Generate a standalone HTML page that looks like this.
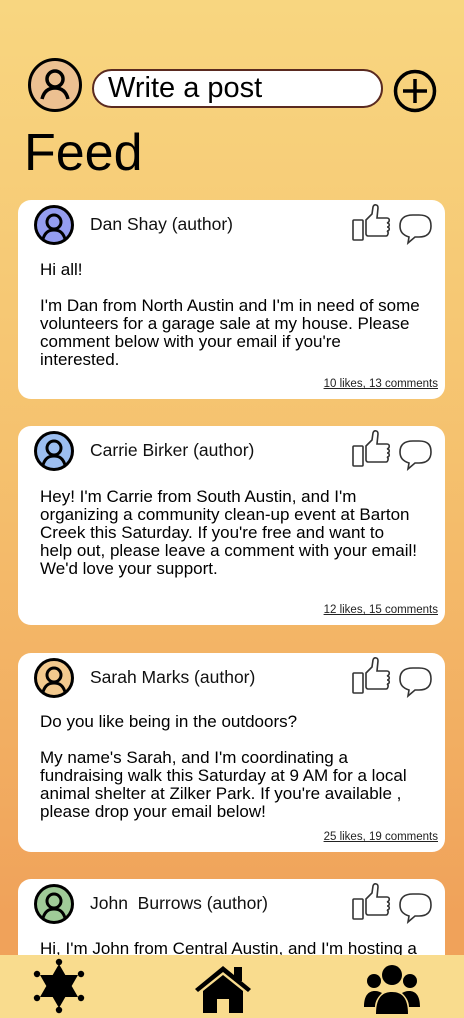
<!DOCTYPE html><html><head><style>
*{margin:0;padding:0;box-sizing:border-box}
html,body{width:464px;height:1018px;overflow:hidden}
body{position:relative;font-family:"Liberation Sans",sans-serif;background:linear-gradient(#f8d680 0%,#f5c16e 45%,#f0a25a 90%)}
.a{position:absolute}
.card{position:absolute;left:18px;width:427px;height:199px;background:#fff;border-radius:13px}
.av{position:absolute;left:16px;top:5px;width:40px;height:40px;border:3px solid #000;border-radius:50%}
.nm{position:absolute;left:72px;top:14px;font-size:17.5px;color:#111}
.bd{position:absolute;left:22px;top:61px;font-size:17px;line-height:18px;white-space:nowrap;color:#000}
.lk{position:absolute;right:7px;bottom:9px;font-size:11.5px;text-decoration:underline;color:#222}
.ic{position:absolute;left:334px;top:3px}
</style></head><body>
<div class="a" style="left:28px;top:58px;width:54px;height:54px;border:3px solid #000;border-radius:50%;background:#ecc091">
<svg width="48" height="48" viewBox="0 0 48 48"><circle cx="24" cy="18" r="8" fill="none" stroke="#000" stroke-width="3.5"/><path d="M11 38c2-8 7-11 13-11s11 3 13 11" fill="none" stroke="#000" stroke-width="3.5"/></svg></div>
<div class="a" style="left:92px;top:69px;width:291px;height:39px;border:2px solid #5a2a20;border-radius:20px;background:#fff;font-size:29px;line-height:35px;padding-left:14px">Write a post</div>
<svg class="a" style="left:393px;top:69px" width="44" height="44" viewBox="0 0 44 44"><circle cx="22" cy="22" r="19.5" fill="none" stroke="#000" stroke-width="3.5"/><path d="M22 10v24M10 22h24" stroke="#000" stroke-width="3.5"/></svg>
<div class="a" style="left:24px;top:122px;font-size:52px;line-height:62px">Feed</div>

<svg width="0" height="0" style="position:absolute"><defs>
<g id="icons"><rect x="1" y="17" width="10" height="20" rx="1" fill="none" stroke="#333" stroke-width="1.6"/><path d="M14 17l6-6 1-7c1-3 5-3 5 1l-1 10h10c3 0 3 4 0 5 3 0 3 4 0 4 3 0 3 4 0 4 2 1 1 5-1 5H16c-1 0-2-1-2-2z" fill="none" stroke="#333" stroke-width="1.6"/><path d="M56 40l1-6c-6-2-9-5-9-11 0-7 4-11 13-11h6c9 0 12 4 12 11s-4 11-12 11h-4z" fill="none" stroke="#333" stroke-width="1.6"/></g>
<g id="person"><circle cx="20" cy="15" r="7" fill="none" stroke="#000" stroke-width="3"/><path d="M9 32c2-7 6-9 11-9s9 2 11 9" fill="none" stroke="#000" stroke-width="3"/></g>
</defs></svg>

<div class="card" style="top:200px"><div class="av" style="background:#949df0"><svg width="34" height="34" viewBox="3 1 34 34"><use href="#person"/></svg></div><div class="nm">Dan Shay (author)</div><svg class="ic" width="82" height="42"><use href="#icons"/></svg>
<div class="bd">Hi all!<br><br>I'm Dan from North Austin and I'm in need of some<br>volunteers for a garage sale at my house. Please<br>comment below with your email if you're<br>interested.</div><div class="lk">10 likes, 13 comments</div></div>

<div class="card" style="top:426px"><div class="av" style="background:#9cbef0"><svg width="34" height="34" viewBox="3 1 34 34"><use href="#person"/></svg></div><div class="nm">Carrie Birker (author)</div><svg class="ic" width="82" height="42"><use href="#icons"/></svg>
<div class="bd" style="top:62px">Hey! I'm Carrie from South Austin, and I'm<br>organizing a community clean-up event at Barton<br>Creek this Saturday. If you're free and want to<br>help out, please leave a comment with your email!<br>We'd love your support.</div><div class="lk">12 likes, 15 comments</div></div>

<div class="card" style="top:653px"><div class="av" style="background:#f2c98e"><svg width="34" height="34" viewBox="3 1 34 34"><use href="#person"/></svg></div><div class="nm">Sarah Marks (author)</div><svg class="ic" width="82" height="42"><use href="#icons"/></svg>
<div class="bd" style="top:60px">Do you like being in the outdoors?<br><br>My name's Sarah, and I'm coordinating a<br>fundraising walk this Saturday at 9 AM for a local<br>animal shelter at Zilker Park. If you're available ,<br>please drop your email below!</div><div class="lk">25 likes, 19 comments</div></div>

<div class="card" style="top:879px;height:120px"><div class="av" style="background:#a0cb98"><svg width="34" height="34" viewBox="3 1 34 34"><use href="#person"/></svg></div><div class="nm">John&nbsp; Burrows (author)</div><svg class="ic" width="82" height="42"><use href="#icons"/></svg>
<div class="bd" style="top:61px">Hi, I'm John from Central Austin, and I'm hosting a</div></div>

<div class="a" style="left:0;top:955px;width:464px;height:63px;background:#f9dc8e"></div>
<svg class="a" style="left:29px;top:957px" width="60" height="58" viewBox="0 0 60 58"><path d="M30 7L49 40H11z M30 51L11 18h38z" fill="#000"/><g fill="#000"><circle cx="30" cy="5" r="3.2"/><circle cx="52" cy="17" r="3.2"/><circle cx="52" cy="41" r="3.2"/><circle cx="30" cy="53" r="3.2"/><circle cx="8" cy="41" r="3.2"/><circle cx="8" cy="17" r="3.2"/></g></svg>
<svg class="a" style="left:194px;top:961px" width="58" height="54" viewBox="0 0 58 54"><path d="M1 28L29 5l28 23-3 3L29 11 4 31z" fill="#000"/><rect x="40" y="6" width="8" height="14" fill="#000"/><path d="M9 30L29 14l20 16v22H35V38H23v14H9z" fill="#000"/></svg>
<svg class="a" style="left:364px;top:964px" width="56" height="52" viewBox="0 0 56 52"><g fill="#000"><circle cx="28" cy="11" r="10"/><circle cx="10" cy="17" r="7"/><circle cx="46" cy="17" r="7"/><path d="M12 50c0-16 6-22 16-22s16 6 16 22z"/><path d="M0 43c0-11 4-16 11-16 3 0 5 1 7 2-4 4-7 8-7 14z"/><path d="M56 43c0-11-4-16-11-16-3 0-5 1-7 2 4 4 7 8 7 14z"/></g></svg>
</body></html>
